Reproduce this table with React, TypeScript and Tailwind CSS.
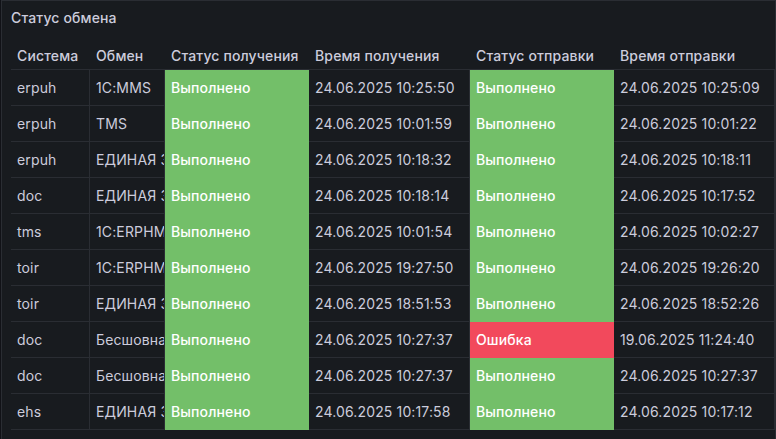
type Status = "ok" | "error";

type ExchangeRow = {
  system: string;
  exchange: string;
  receiveStatus: Status;
  receiveTime: string;
  sendStatus: Status;
  sendTime: string;
};

const rows: ExchangeRow[] = [
  { system: "erpuh", exchange: "1С:MMS", receiveStatus: "ok", receiveTime: "24.06.2025 10:25:50", sendStatus: "ok", sendTime: "24.06.2025 10:25:09" },
  { system: "erpuh", exchange: "TMS", receiveStatus: "ok", receiveTime: "24.06.2025 10:01:59", sendStatus: "ok", sendTime: "24.06.2025 10:01:22" },
  { system: "erpuh", exchange: "ЕДИНАЯ ЗАГРУЗКА", receiveStatus: "ok", receiveTime: "24.06.2025 10:18:32", sendStatus: "ok", sendTime: "24.06.2025 10:18:11" },
  { system: "doc", exchange: "ЕДИНАЯ ЗАГРУЗКА", receiveStatus: "ok", receiveTime: "24.06.2025 10:18:14", sendStatus: "ok", sendTime: "24.06.2025 10:17:52" },
  { system: "tms", exchange: "1С:ERPHMS", receiveStatus: "ok", receiveTime: "24.06.2025 10:01:54", sendStatus: "ok", sendTime: "24.06.2025 10:02:27" },
  { system: "toir", exchange: "1С:ERPHMS", receiveStatus: "ok", receiveTime: "24.06.2025 19:27:50", sendStatus: "ok", sendTime: "24.06.2025 19:26:20" },
  { system: "toir", exchange: "ЕДИНАЯ ЗАГРУЗКА", receiveStatus: "ok", receiveTime: "24.06.2025 18:51:53", sendStatus: "ok", sendTime: "24.06.2025 18:52:26" },
  { system: "doc", exchange: "Бесшовная интеграция", receiveStatus: "ok", receiveTime: "24.06.2025 10:27:37", sendStatus: "error", sendTime: "19.06.2025 11:24:40" },
  { system: "doc", exchange: "Бесшовная интеграция", receiveStatus: "ok", receiveTime: "24.06.2025 10:27:37", sendStatus: "ok", sendTime: "24.06.2025 10:27:37" },
  { system: "ehs", exchange: "ЕДИНАЯ ЗАГРУЗКА", receiveStatus: "ok", receiveTime: "24.06.2025 10:17:58", sendStatus: "ok", sendTime: "24.06.2025 10:17:12" },
];

const columns = [
  { title: "Система", width: "w-[79px]" },
  { title: "Обмен", width: "w-[75px]" },
  { title: "Статус получения", width: "w-[144px]" },
  { title: "Время получения", width: "w-[161px]" },
  { title: "Статус отправки", width: "w-[144px]" },
  { title: "Время отправки", width: "flex-1" },
];

function TextCell({ value, width }: { value: string; width: string }) {
  return (
    <div
      className={`${width} flex h-[36px] shrink-0 items-center overflow-hidden whitespace-nowrap border-b border-r border-[#2a2d33] px-[6px] text-[#ccccdc]`}
    >
      {value}
    </div>
  );
}

function StatusCell({ status }: { status: Status }) {
  const className =
    status === "ok"
      ? "w-[144px] flex h-[36px] shrink-0 items-center border-b border-[#73bf69] bg-[#73bf69] px-[6px] font-medium text-white"
      : "w-[144px] flex h-[36px] shrink-0 items-center border-b border-[#f2495c] bg-[#f2495c] px-[6px] font-medium text-white";

  return <div className={className}>{status === "ok" ? "Выполнено" : "Ошибка"}</div>;
}

function TableHeader() {
  return (
    <div className="flex h-[33px] border-b border-[#2a2d33] pt-[4px]">
      {columns.map((column) => (
        <div
          key={column.title}
          className={`${column.width} flex shrink-0 items-center whitespace-nowrap px-[6px] font-medium text-[#ccccdc]`}
        >
          {column.title}
        </div>
      ))}
    </div>
  );
}

export default function App() {
  return (
    <div
      className="h-[439px] w-[776px] overflow-hidden bg-[#111217] pl-[1px] text-[14px] tracking-[0.01em]"
      style={{ fontFamily: "Inter, 'Noto Sans', sans-serif" }}
    >
      <div className="h-[460px] border border-[#2a2d33] bg-[#181b1f]">
        <div className="flex h-[33px] items-center px-[9px] font-medium text-[#ccccdc]">
          Статус обмена
        </div>

        <div className="ml-[9px] mt-[3px]">
          <TableHeader />
          {rows.map((row, index) => (
            <div key={index} className="flex">
              <TextCell value={row.system} width="w-[79px]" />
              <TextCell value={row.exchange} width="w-[75px]" />
              <StatusCell status={row.receiveStatus} />
              <TextCell value={row.receiveTime} width="w-[161px]" />
              <StatusCell status={row.sendStatus} />
              <TextCell value={row.sendTime} width="flex-1" />
            </div>
          ))}
        </div>
      </div>
    </div>
  );
}
